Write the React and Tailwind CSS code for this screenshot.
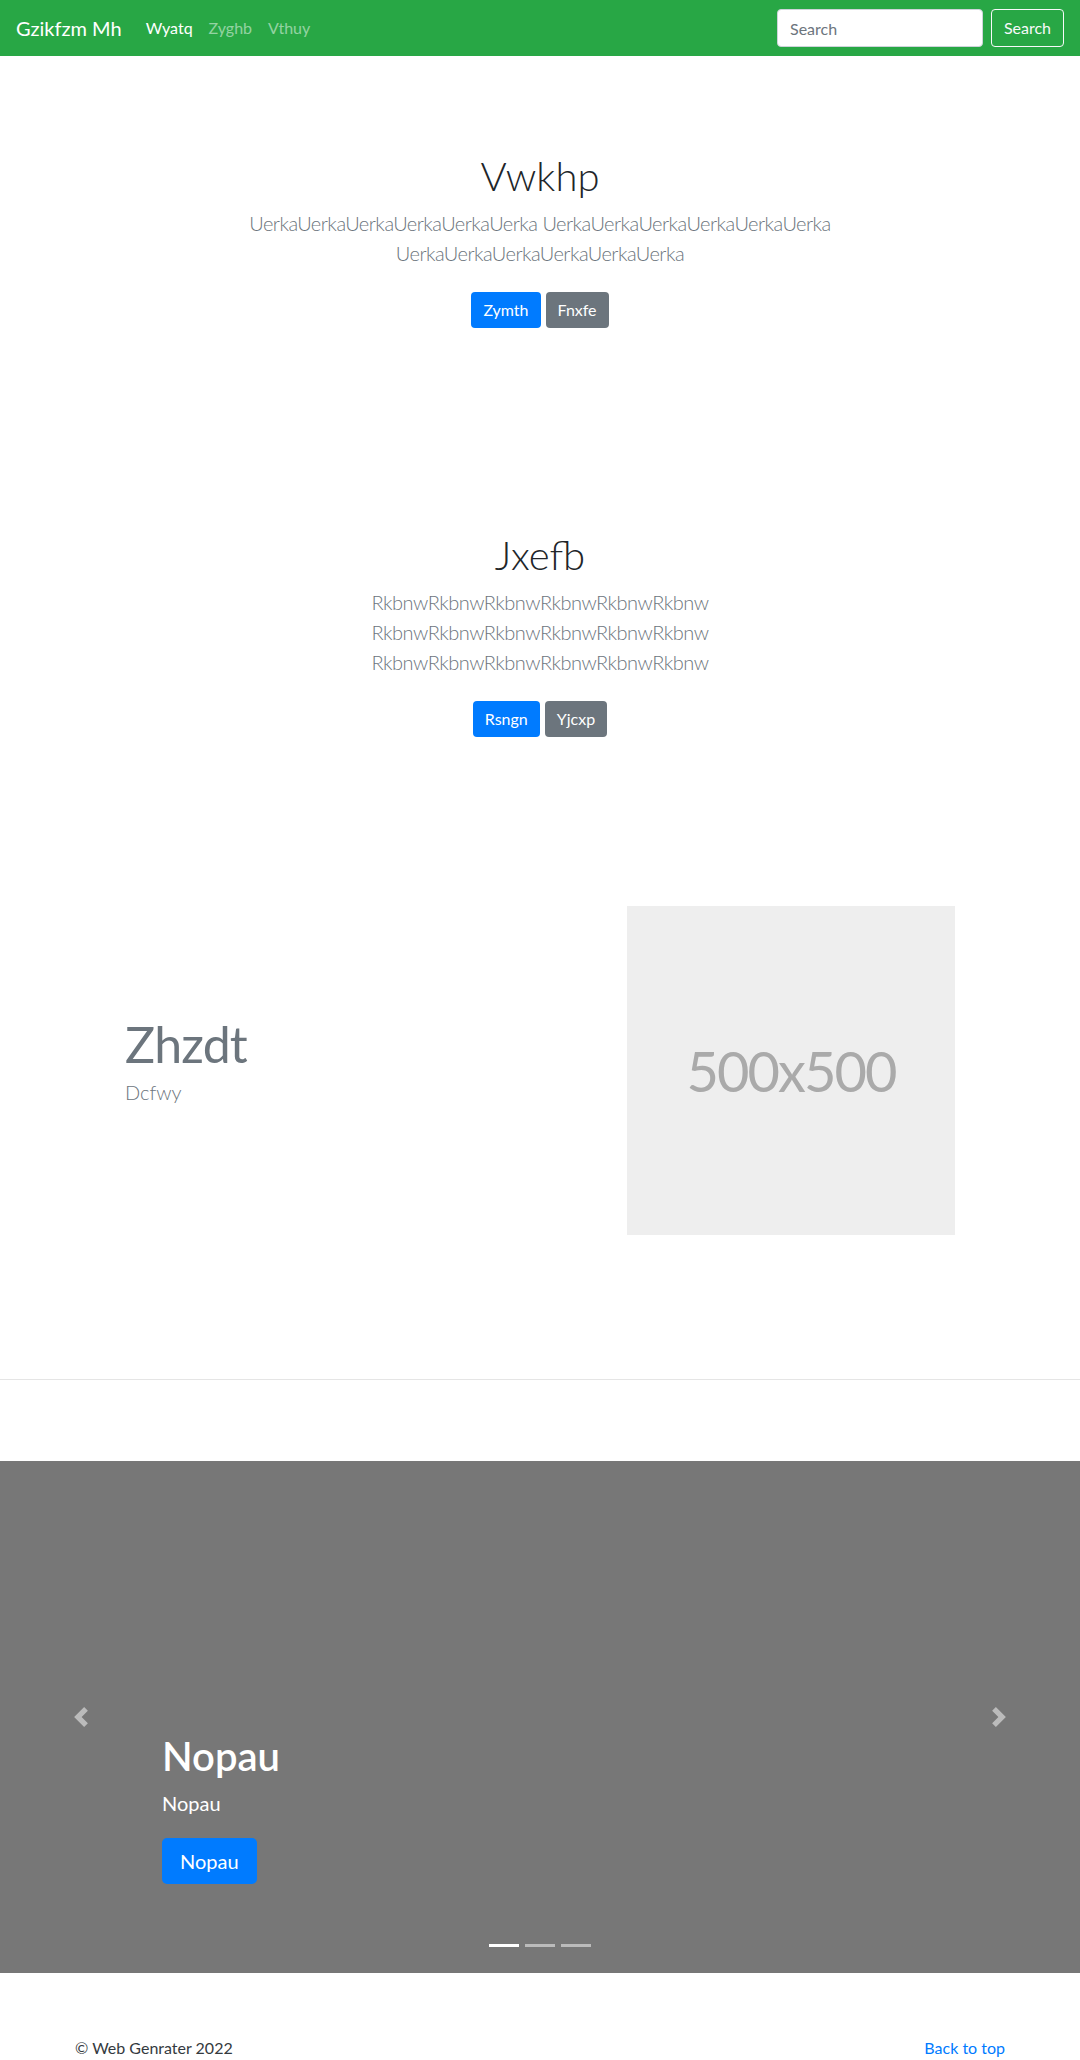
export default function App() {
  return (
    <div className="min-h-screen bg-white font-['Lato','Open_Sans',sans-serif] text-[#212529]">
      {/* Navbar */}
      <nav className="flex h-14 items-center bg-[#28a745] px-4">
        <a className="mr-4 text-xl leading-[30px] text-white">Gzikfzm Mh</a>
        <ul className="flex">
          <li><a className="block px-2 py-2 leading-6 text-white">Wyatq</a></li>
          <li><a className="block px-2 py-2 leading-6 text-white/50">Zyghb</a></li>
          <li><a className="block px-2 py-2 leading-6 text-white/50">Vthuy</a></li>
        </ul>
        <form className="ml-auto flex items-center">
          <input
            placeholder="Search"
            className="h-[38px] w-[206px] rounded border border-[#ced4da] bg-white px-3 text-base text-[#495057] placeholder:text-[#6c757d]"
          />
          <button className="ml-2 h-[38px] w-[73px] rounded border border-[#f8f9fa] text-base text-[#f8f9fa]">
            Search
          </button>
        </form>
      </nav>

      {/* Hero sections */}
      <Hero
        className="pt-24"
        title="Vwkhp"
        text="UerkaUerkaUerkaUerkaUerkaUerka UerkaUerkaUerkaUerkaUerkaUerka UerkaUerkaUerkaUerkaUerkaUerka"
        primary="Zymth"
        secondary="Fnxfe"
      />
      <Hero
        className="pt-[203px]"
        title="Jxefb"
        text="RkbnwRkbnwRkbnwRkbnwRkbnwRkbnw RkbnwRkbnwRkbnwRkbnwRkbnwRkbnw RkbnwRkbnwRkbnwRkbnwRkbnwRkbnw"
        primary="Rsngn"
        secondary="Yjcxp"
      />

      {/* Featurette */}
      <section className="flex items-center px-[125px] pt-[169px]">
        <div className="flex-1">
          <h2 className="mb-2 text-[50px] leading-none tracking-[-0.05rem] text-[#6c757d]">Zhzdt</h2>
          <p className="mb-4 text-xl font-light leading-[30px] text-[#6c757d]">Dcfwy</p>
        </div>
        <div className="flex h-[329px] w-[328px] items-center justify-center bg-[#eee] text-[56px] tracking-[-2px] text-[#aaa]">
          500x500
        </div>
      </section>

      <hr className="mt-[144px] border-t border-[#e5e5e5]" />

      {/* Carousel */}
      <div className="relative mt-[81px] h-[512px] bg-[#777]">
        <div className="absolute left-0 top-0 flex h-full w-[15%] items-center justify-center opacity-50">
          <svg width="20" height="20" viewBox="0 0 8 8" fill="#fff">
            <path d="M5.25 0l-4 4 4 4 1.5-1.5L4.25 4l2.5-2.5L5.25 0z" />
          </svg>
        </div>
        <div className="absolute right-0 top-0 flex h-full w-[15%] items-center justify-center opacity-50">
          <svg width="20" height="20" viewBox="0 0 8 8" fill="#fff">
            <path d="M2.75 0l-1.5 1.5L3.75 4l-2.5 2.5L2.75 8l4-4-4-4z" />
          </svg>
        </div>

        <div className="absolute bottom-[89px] left-[15%] right-[15%] text-white">
          <h1 className="mb-2 text-[40px] font-semibold leading-[48px]">Nopau</h1>
          <p className="mb-5 text-xl leading-[30px]">Nopau</p>
          <a className="inline-block rounded-[5px] bg-[#007bff] px-[18px] py-2 text-xl leading-[30px] text-white">Nopau</a>
        </div>

        <div className="absolute bottom-[26px] left-0 right-0 flex justify-center gap-1.5">
          <span className="h-[3px] w-[30px] bg-white"></span>
          <span className="h-[3px] w-[30px] bg-white/50"></span>
          <span className="h-[3px] w-[30px] bg-white/50"></span>
        </div>
      </div>

      {/* Footer */}
      <footer className="flex justify-between px-[75px] pb-4 pt-[63px] leading-6">
        <p className="text-[#343a40]">© Web Genrater 2022</p>
        <a className="text-[#007bff]">Back to top</a>
      </footer>
    </div>
  );
}

function Hero({ className, title, text, primary, secondary }) {
  return (
    <section className={"text-center " + className}>
      <div className="mx-auto max-w-[640px]">
        <h1 className="mb-2 text-[40px] font-light leading-[48px]">{title}</h1>
        <p className="text-xl font-light leading-[30px] tracking-[-0.5px] text-[#6c757d]">{text}</p>
        <div className="mt-6 flex justify-center gap-[5px]">
          <a className="rounded bg-[#007bff] px-3 py-1.5 leading-6 text-white">{primary}</a>
          <a className="rounded bg-[#6c757d] px-3 py-1.5 leading-6 text-white">{secondary}</a>
        </div>
      </div>
    </section>
  );
}
